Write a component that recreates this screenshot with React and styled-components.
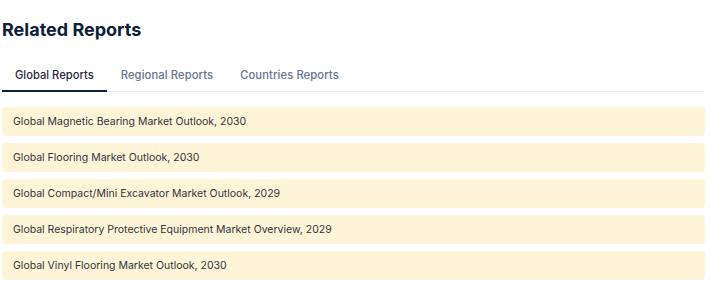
import React, { useState } from "react";
import styled, { createGlobalStyle } from "styled-components";

const GlobalStyle = createGlobalStyle`
  body {
    margin: 0;
    background: #ffffff;
    font-family: Inter, "Liberation Sans", sans-serif;
  }
`;

const TABS = ["Global Reports", "Regional Reports", "Countries Reports"];

const REPORTS = [
  "Global Magnetic Bearing Market Outlook, 2030",
  "Global Flooring Market Outlook, 2030",
  "Global Compact/Mini Excavator Market Outlook, 2029",
  "Global Respiratory Protective Equipment Market Overview, 2029",
  "Global Vinyl Flooring Market Outlook, 2030",
];

function App() {
  const [active, setActive] = useState(0);

  return (
    <>
      <GlobalStyle />
      <Section>
        <Title>Related Reports</Title>
        <TabList>
          {TABS.map((tab, i) => (
            <Tab key={tab} $active={i === active} onClick={() => setActive(i)}>
              {tab}
            </Tab>
          ))}
        </TabList>
        <List>
          {REPORTS.map((report) => (
            <Item key={report}>
              <a href="#">{report}</a>
            </Item>
          ))}
        </List>
      </Section>
    </>
  );
}

const Section = styled.section`
  padding: 18px 10px 0 2px;
`;

const Title = styled.h2`
  margin: 0 0 18px;
  font-size: 18px;
  font-weight: 700;
  line-height: 24px;
  color: #0d2038;
`;

const TabList = styled.div`
  display: flex;
  gap: 1px;
  border-bottom: 1px solid #e5e7eb;
  margin-bottom: 15px;
`;

const Tab = styled.button`
  padding: 8px 13px 8px;
  margin-bottom: -1px;
  border: none;
  border-bottom: 2px solid ${(p) => (p.$active ? "#0d2038" : "transparent")};
  background: none;
  font-family: inherit;
  font-size: 11.2px;
  font-weight: 500;
  line-height: 14px;
  letter-spacing: ${(p) => (p.$active ? "0" : "0.01em")};
  color: ${(p) => (p.$active ? "#1f2937" : "#64748b")};
  cursor: pointer;
`;

const List = styled.ul`
  list-style: none;
  margin: 0;
  padding: 0;
  display: flex;
  flex-direction: column;
  gap: 7px;
`;

const Item = styled.li`
  display: flex;
  align-items: center;
  height: 29px;
  padding: 0 11px;
  border-radius: 4px;
  background: #fef4d8;

  a {
    font-size: 10.5px;
    color: #30343e;
    text-decoration: none;
  }
`;

export default App;
